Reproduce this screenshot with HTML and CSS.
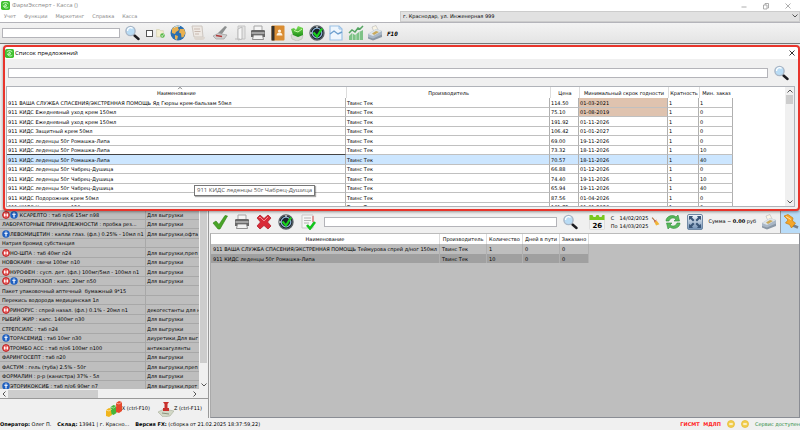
FILE: index.html
```html
<!DOCTYPE html>
<html lang="ru">
<head>
<meta charset="utf-8">
<title>ФармЭксперт - Касса</title>
<link rel="stylesheet" href="styles.css">
</head>
<body>
<svg class="defs" aria-hidden="true">
  <linearGradient id="gSteel" x1="0" y1="0" x2="0" y2="1"><stop offset="0" stop-color="#f4f8fc"/><stop offset="1" stop-color="#6f8fb4"/></linearGradient>
  <linearGradient id="gGreen" x1="0" y1="0" x2="0" y2="1"><stop offset="0" stop-color="#7fe05a"/><stop offset="1" stop-color="#178a12"/></linearGradient>
  <symbol id="logo" viewBox="0 0 16 16"><rect width="16" height="16" rx="3" fill="#3fbf2f"/><path d="M3 5c3-3 7-3 10 0M4 8c0 4 6 6 9 3M8 5l2 4-4 1z" fill="none" stroke="#d8ffd0" stroke-width="1.6"/></symbol>
  <symbol id="search" viewBox="0 0 16 16"><path d="M10.500 10.500L14.500 14" stroke="#1d1d22" stroke-width="2.400" stroke-linecap="round"/><circle cx="6.500" cy="6" r="4.600" fill="#b9dcf5" stroke="#a9b6c6" stroke-width="1.400"/><path d="M3.500 6a3 3 0 0 1 5-2.500" stroke="#fff" stroke-width="1.300" fill="none"/></symbol>
  <symbol id="docok" viewBox="0 0 16 16"><path d="M1 4V1h5l2 2h5v11H1z" fill="#f3efd2" stroke="#cfc8a4"/><circle cx="11.500" cy="11.500" r="4" fill="#57b847"/><path d="M9.500 11.500l1.500 2 2.500-4" stroke="#fff" stroke-width="1.300" fill="none"/></symbol>
  <symbol id="globe" viewBox="0 0 16 16"><circle cx="8" cy="8" r="7.500" fill="#2b6fb0"/><path d="M2 4c2-3 5-3.500 7-3L8 3l1 2-3 2-1 2-3-1zM10 4l4 0 1.500 4-2 4-2 .5-.5-4-2-1zM5 10l3 1-1 4-2-1z" fill="#e8b050"/><path d="M4 2.500c2-1.500 5-1.500 6-1" stroke="#bfe0f5" fill="none"/></symbol>
  <symbol id="scroll" viewBox="0 0 16 16"><path d="M2 1h10l1 11H4z" fill="#eee9e4" stroke="#cdc6c0"/><path d="M4 12h11c0 3-3 3-3 3H6c-2 0-2-3-2-3z" fill="#ddd6cf"/><path d="M4 4h6M4.500 6.500h6M5 9h4" stroke="#c9b9b0"/></symbol>
  <symbol id="scanner" viewBox="0 0 16 16"><path d="M1 11l5-2.500 9 1.500-3 4H4z" fill="#cfcfcf" stroke="#9d9d9d" stroke-width=".7"/><path d="M6 8l7-7 2 1-5 7z" fill="#8d9090"/><path d="M4 10.500l6 1" stroke="#b03838" stroke-width="1.300"/></symbol>
  <symbol id="folder" viewBox="0 0 16 16"><path d="M6 1h7v13H6z" fill="#e4e4e4" stroke="#c4c4c4"/><path d="M6 4L10 2v12l-4 1z" fill="#f6f6f6" stroke="#b0b0b0" stroke-width=".8"/><path d="M3 14h5" stroke="#bbb"/></symbol>
  <symbol id="printer" viewBox="0 0 16 16"><path d="M4 6V1h8v5" fill="#f5f5f5" stroke="#a5a5a5"/><path d="M1 6q0-1 1.500-1h11Q15 5 15 6v6H1z" fill="#676767"/><path d="M1.500 8h13" stroke="#bababa" stroke-width="1.500"/><path d="M3.500 10h9l1 4.500h-11z" fill="#f2f2f2" stroke="#777" stroke-width=".8"/></symbol>
  <symbol id="book" viewBox="0 0 16 16"><rect x="1.500" y=".5" width="13" height="15" rx="1" fill="#da8d33"/><path d="M1.500 1h3v14.500h-3z" fill="#33302c"/><circle cx="9.500" cy="6" r="1.600" fill="#fff3df"/><path d="M6.500 10.500c0-4 6-4 6 0z" fill="#fff3df"/></symbol>
  <symbol id="box" viewBox="0 0 16 16"><path d="M2 10l6-2 6 2-1 4-5 2-5-2z" fill="#d9dcd6" stroke="#b2b8ae" stroke-width=".6"/><path d="M2 4l3-1 2 2 2-4 5 2v7l-5 2-5-2z" fill="url(#gGreen)"/><path d="M5 5.500l4 1.500 4-3" stroke="#c8ffa8" fill="none"/></symbol>
  <symbol id="gauge" viewBox="0 0 16 16"><circle cx="8" cy="8" r="7" fill="#18222a" stroke="#5a6268" stroke-width="1.400"/><circle cx="8" cy="8" r="4.800" fill="none" stroke="#8fb7d8" stroke-width="1.200"/><path d="M4.500 7.500l3.500 4 5-8" stroke="#19d21e" stroke-width="2.200" fill="none"/><path d="M8 1v2M1 8h2" stroke="#fff"/></symbol>
  <symbol id="docwave" viewBox="0 0 16 16"><path d="M2 1h9l3 3v11H2z" fill="#eef6fd" stroke="#9cc2e6" stroke-width="1.200"/><path d="M11 1v3h3" fill="none" stroke="#9cc2e6"/><path d="M2 9l4-3 4 3 4-2" fill="none" stroke="#6d9fce" stroke-width="1.400"/></symbol>
  <symbol id="chart" viewBox="0 0 16 16"><path d="M1 15V11l3-3 3 2 4-3 4-2v10z" fill="#7ec287"/><path d="M1 8l3-3 3 2 3-4 2 1 3-3" fill="none" stroke="#55a562" stroke-width="1.500"/><path d="M4.500 8v7M8 9v6M11.500 7v8" stroke="#dff2e1" stroke-width=".6"/></symbol>
  <symbol id="register" viewBox="0 0 16 16"><path d="M5 2l4-1.500L11 5 7 7z" fill="#faf5e6" stroke="#aaa" stroke-width=".5"/><path d="M1 9l8-5 6 2v5l-9 4-5-2z" fill="#a9b7c6"/><path d="M1 9l8-5 6 2-9 5z" fill="#dce3e8"/><path d="M5 8.500l4-2.500 3 1-5 3z" fill="#c9a95b"/><path d="M1 12l5 1.500 9-4V12l-9 3.500-5-2z" fill="#8a97a5"/></symbol>
  <symbol id="check" viewBox="0 0 16 16"><path d="M1 9l3-2 3 3.500L13 1.500l2.500 .5L8 15H6z" fill="#4aa528" stroke="#2f7f16" stroke-width=".6"/></symbol>
  <symbol id="cross" viewBox="0 0 16 16"><path d="M1 4l3-3 4 3.500L12 1l3 3-3.500 4L15 12l-3 3-4-3.500L4 15l-3-3 3.500-4z" fill="#d92b38" stroke="#a81722" stroke-width=".7"/><path d="M3 4l1-1 4 4 4-4" stroke="#f48990" fill="none"/></symbol>
  <symbol id="listok" viewBox="0 0 16 16"><path d="M2 1h11v13H2z" fill="#f6f6f6" stroke="#c9c9c9"/><path d="M4 4h7M4 6.500h7M4 9h5" stroke="#999" stroke-width=".7"/><path d="M13 2v6" stroke="#d66" stroke-width="1.200"/><path d="M7 11l3 3.500L15 8" stroke="#12c41b" stroke-width="2.600" fill="none"/></symbol>
  <symbol id="calendar" viewBox="0 0 16 16"><rect x=".5" y="2" width="15" height="13.500" rx="1" fill="#f2f2f2" stroke="#ccc" stroke-width=".5"/><path d="M.5 1h3l1 2h2l1-2h2l1 2h2l1-2h2v5H.5z" fill="#78c81f"/></symbol>
  <symbol id="broom" viewBox="0 0 16 16"><path d="M2 1l6 7" stroke="#b06b3a" stroke-width="2"/><path d="M6 9l4-3 5 7-6 2z" fill="#f0b53a"/><path d="M5.500 9l4-3.500" stroke="#c63a3a" stroke-width="1.500"/></symbol>
  <symbol id="refresh" viewBox="0 0 16 16"><path d="M1 7c0-5 7-7 10-4l2-2 1.500 6H9l2-2C8 3 5 4 4 7z" fill="#58b85a" stroke="#2f8d39" stroke-width=".6"/><path d="M15 9c0 5-7 7-10 4l-2 2L1.500 9H7l-2 2c3 2 6 1 7-2z" fill="#58b85a" stroke="#2f8d39" stroke-width=".6"/></symbol>
  <symbol id="expand" viewBox="0 0 16 16"><rect x=".5" y=".5" width="15" height="15" rx="1.500" fill="url(#gSteel)" stroke="#7089a5"/><path d="M2 2h4L5 3.500 7.500 6 6 7.500 3.500 5 2 6zM14 2h-4l1 1.500L8.500 6 10 7.500 12.500 5 14 6zM2 14h4l-1-1.500L7.500 10 6 8.500 3.500 11 2 10zM14 14h-4l1-1.500L8.500 10 10 8.500l2.500 2.500 1.500-1z" fill="#3a5678"/></symbol>
  <symbol id="pin" viewBox="0 0 16 16"><path d="M9 11l6 2.500" stroke="#75808c" stroke-width="2.600"/><path d="M1 2l4-1.500 5 3.500-.5 3 3 2-4 5-2-3.500L2.500 9 5 6z" fill="#f4a62a" stroke="#c97c10" stroke-width=".7"/><path d="M3 2.500l5 3" stroke="#ffe0a0"/></symbol>
  <symbol id="stop" viewBox="0 0 16 16"><circle cx="8" cy="8" r="6.800" fill="#e66" stroke="#b92222" stroke-width="2"/><path d="M4 8h8M5 5v6M11 5v6" stroke="#fff" stroke-width="1.800"/></symbol>
  <symbol id="info" viewBox="0 0 16 16"><circle cx="8" cy="8" r="7.500" fill="#1e5fc0"/><path d="M4.500 6.500h7M8 7v6M8 3v2" stroke="#fff" stroke-width="2.400" fill="none"/></symbol>
  <symbol id="bars" viewBox="0 0 16 16"><path d="M0 9l3-2 3 1v6l-3 2-3-1z" fill="#f1b51c"/><path d="M4.500 6l3-2 3 1v7l-3 2-2-1z" fill="#47b53a"/><path d="M10 2l3-2 3 1v9l-3 2-3-1z" fill="#e5492c"/><path d="M0 9l3 1 3-2M4.500 6l3 1 3-2M10 2l3 1 3-2" stroke="#fff" stroke-width=".7" fill="none" opacity=".7"/></symbol>
  <symbol id="stamp" viewBox="0 0 16 16"><path d="M0 11l6-3 10 2-4 5-7 1z" fill="#d3d8c6" stroke="#a8af9a" stroke-width=".6"/><path d="M5 1h6l-1.500 2v4h1.500v3H5V7h1.500V3z" fill="#c9302c"/><path d="M4 12l7 1" stroke="#8a937c"/></symbol>
  <symbol id="minus" viewBox="0 0 16 16"><circle cx="8" cy="8" r="7" fill="#f2cf52" stroke="#e6b932" stroke-width="1.500"/><path d="M4.500 8h7" stroke="#fff" stroke-width="2.600"/></symbol>
  <symbol id="up" viewBox="0 0 8 8"><path d="M1.500 5.500L4 3l2.500 2.500" fill="none" stroke="#555"/></symbol>
  <symbol id="down" viewBox="0 0 8 8"><path d="M1.500 2.500L4 5l2.500-2.500" fill="none" stroke="#555"/></symbol>
  <symbol id="left" viewBox="0 0 8 8"><path d="M5.500 1.500L3 4l2.500 2.500" fill="none" stroke="#555"/></symbol>
  <symbol id="right" viewBox="0 0 8 8"><path d="M2.500 1.500L5 4 2.500 6.500" fill="none" stroke="#555"/></symbol>
  <symbol id="wmin" viewBox="0 0 8 8"><path d="M1.500 5h5" stroke="#999" stroke-width=".8"/></symbol>
  <symbol id="wmax" viewBox="0 0 8 8"><path d="M3 3V1.500h3.500v4.500H5.500M1.500 3h3.500v4H1.500z" fill="none" stroke="#999" stroke-width=".8"/></symbol>
  <symbol id="wclose" viewBox="0 0 8 8"><path d="M1.500 1.500l5 5M6.500 1.500l-5 5" stroke="currentColor" stroke-width=".8"/></symbol>
</svg>

<div class="app">
  <header class="titlebar">
    <svg class="ic-s"><use href="#logo"/></svg>
    <span class="app-name">ФармЭксперт - Касса ()</span>
    <div class="win-buttons">
      <button aria-label="Свернуть"><svg class="ic-xs"><use href="#wmin"/></svg></button>
      <button aria-label="Развернуть"><svg class="ic-xs"><use href="#wmax"/></svg></button>
      <button aria-label="Закрыть"><svg class="ic-xs"><use href="#wclose"/></svg></button>
    </div>
  </header>
  <div class="menubar">
    <nav class="menu"><button>Учет</button><button>Функции</button><button>Маркетинг</button><button>Справка</button><button>Касса</button></nav>
    <div class="address">
      <select aria-label="Адрес"><option>г. Краснодар, ул. Инженерная 999</option></select>
      <svg class="ic-xs chev"><use href="#down"/></svg>
    </div>
  </div>
  <div class="toolbar">
    <input class="field main-search" type="text" aria-label="Поиск">
    <button class="find" aria-label="Найти"><svg class="ic"><use href="#search"/></svg></button>
    <label class="tick"><input type="checkbox" aria-label="Только проверенные"><svg class="ic-s"><use href="#docok"/></svg></label>
    <div class="tools">
      <button aria-label="Интернет"><svg class="ic"><use href="#globe"/></svg></button>
      <button aria-label="Рецепты"><svg class="ic"><use href="#scroll"/></svg></button>
      <button class="gap" aria-label="Сканер"><svg class="ic"><use href="#scanner"/></svg></button>
      <button aria-label="Папка"><svg class="ic"><use href="#folder"/></svg></button>
    </div>
    <div class="tools main-tools">
      <button aria-label="Печать"><svg class="ic"><use href="#printer"/></svg></button>
      <button aria-label="Справочник"><svg class="ic"><use href="#book"/></svg></button>
      <button aria-label="Товар"><svg class="ic"><use href="#box"/></svg></button>
      <button aria-label="Контроль"><svg class="ic"><use href="#gauge"/></svg></button>
      <button aria-label="Отчет"><svg class="ic"><use href="#docwave"/></svg></button>
      <button aria-label="График"><svg class="ic"><use href="#chart"/></svg></button>
      <button aria-label="Касса"><svg class="ic"><use href="#register"/></svg></button>
      <span class="hotkey">F10</span>
    </div>
  </div>

  <main class="workspace">
    <section class="stock">
      <div class="stock-view">
        <div class="stock-clip">
        <table class="stock-table">
          <colgroup><col><col class="c-group"></colgroup>
          <tbody>
            <tr><td><svg class="ic-s"><use href="#stop"/></svg><svg class="ic-s"><use href="#info"/></svg> КСАРЕЛТО : таб п/о6 15мг n98</td><td>Для выгрузки</td></tr>
            <tr><td>ЛАБОРАТОРНЫЕ ПРИНАДЛЕЖНОСТИ : пробка рез...</td><td>Для выгрузки</td></tr>
            <tr><td><svg class="ic-s"><use href="#info"/></svg>ЛЕВОМИЦЕТИН : капли глаз. (фл.) 0.25% - 10мл n1</td><td>Для выгрузки,офта</td></tr>
            <tr><td>Натрия бромид субстанция</td><td></td></tr>
            <tr><td><svg class="ic-s"><use href="#stop"/></svg>НО-ШПА : таб 40мг n24</td><td>Для выгрузки,преп</td></tr>
            <tr><td>НОВОКАИН : свечи 100мг n10</td><td>Для выгрузки</td></tr>
            <tr><td><svg class="ic-s"><use href="#stop"/></svg>НУРОФЕН : сусп. дет. (фл.) 100мг/5мл - 100мл n1</td><td>Для выгрузки</td></tr>
            <tr><td><svg class="ic-s"><use href="#stop"/></svg><svg class="ic-s"><use href="#info"/></svg> ОМЕПРАЗОЛ : капс. 20мг n50</td><td>Для выгрузки</td></tr>
            <tr><td>Пакет упаковочный аптечный&nbsp; бумажный 9*15</td><td></td></tr>
            <tr><td>Перекись водорода медицинская 1л</td><td></td></tr>
            <tr><td><svg class="ic-s"><use href="#stop"/></svg>РИНОРУС : спрей назал. (фл.) 0.1% - 20мл n1</td><td>декогестанты для н</td></tr>
            <tr><td>РЫБИЙ ЖИР : капс. 1400мг n30</td><td>Для выгрузки</td></tr>
            <tr><td>СТРЕПСИЛС : таб n24</td><td>Для выгрузки</td></tr>
            <tr><td><svg class="ic-s"><use href="#info"/></svg>ТОРАСЕМИД : таб 10мг n30</td><td>диуретики,Для выг</td></tr>
            <tr><td><svg class="ic-s"><use href="#stop"/></svg>ТРОМБО АСС : таб п/о6 100мг n100</td><td>антикоагулянты</td></tr>
            <tr><td>ФАРИНГОСЕПТ : таб n20</td><td>Для выгрузки</td></tr>
            <tr><td>ФАСТУМ : гель (туба) 2.5% - 50г</td><td>Для выгрузки,преп</td></tr>
            <tr><td>ФОРМАЛИН : р-р (канистра) 37% - 5л</td><td>Для выгрузки</td></tr>
            <tr><td><svg class="ic-s"><use href="#info"/></svg>ЭТОРИКОКСИБ : таб п/о6 90мг n7</td><td>Для выгрузки,прот</td></tr>
          </tbody>
        </table>
        </div>
        <div class="vbar stock-vbar"><span class="thumb"></span><svg class="ic-xs"><use href="#down"/></svg></div>
        <div class="hbar"><svg class="ic-xs"><use href="#left"/></svg><span class="hthumb"></span><svg class="ic-xs"><use href="#right"/></svg></div>
      </div>
      <div class="reports">
        <button><svg class="ic"><use href="#bars"/></svg>X (ctrl-F10)</button>
        <button><svg class="ic"><use href="#stamp"/></svg>Z (ctrl-F11)</button>
      </div>
    </section>

    <section class="order">
      <div class="order-tools">
        <button aria-label="Принять"><svg class="ic"><use href="#check"/></svg></button>
        <button aria-label="Печать"><svg class="ic"><use href="#printer"/></svg></button>
        <button aria-label="Удалить"><svg class="ic"><use href="#cross"/></svg></button>
        <button aria-label="Контроль"><svg class="ic"><use href="#gauge"/></svg></button>
        <button aria-label="Список"><svg class="ic"><use href="#listok"/></svg></button>
        <input class="field grow" type="text" aria-label="Поиск по заказу">
        <button class="wide" aria-label="Найти"><svg class="ic"><use href="#search"/></svg></button>
        <button class="wide cal" aria-label="Период"><svg class="ic"><use href="#calendar"/></svg><span class="day">26</span></button>
        <div class="period"><span>С</span><span>14/02/2025</span><span>По</span><span>14/03/2025</span></div>
        <button class="slim" aria-label="Очистить"><svg class="ic-s"><use href="#broom"/></svg></button>
        <button aria-label="Обновить"><svg class="ic"><use href="#refresh"/></svg></button>
        <button aria-label="Развернуть"><svg class="ic"><use href="#expand"/></svg></button>
        <span class="sum">Сумма ~ <b>0.00</b> руб</span>
        <button aria-label="Касса"><svg class="ic"><use href="#register"/></svg></button>
        <button class="pinned" aria-label="Закрепить"><svg class="ic"><use href="#pin"/></svg></button>
      </div>
      <div class="order-view">
        <table class="order-table">
          <colgroup><col class="o-name"><col class="o-maker"><col class="o-qty"><col class="o-days"><col class="o-done"><col></colgroup>
          <thead><tr><th>Наименование</th><th>Производитель</th><th>Количество</th><th>Дней в пути</th><th>Заказано</th><th></th></tr></thead>
          <tbody>
            <tr><td>911 ВАША СЛУЖБА СПАСЕНИЯ/ЭКСТРЕННАЯ ПОМОЩЬ Теймурова спрей д/ног 150мл</td><td>Твинс Тек</td><td>1</td><td>0</td><td>0</td><td></td></tr>
            <tr class="current"><td>911 КИДС леденцы 50г Ромашка-Липа</td><td>Твинс Тек</td><td>10</td><td>0</td><td>0</td><td></td></tr>
          </tbody>
        </table>
      </div>
    </section>

    <section class="dialog" role="dialog" aria-labelledby="dlg-title">
      <header class="dialog-title">
        <svg class="ic-s"><use href="#logo"/></svg>
        <h1 id="dlg-title">Список предложений</h1>
        <button aria-label="Закрыть окно"><svg class="ic-xs"><use href="#wclose"/></svg></button>
      </header>
      <div class="dialog-search">
        <input class="field grow" type="text" aria-label="Поиск предложений">
        <button aria-label="Найти"><svg class="ic"><use href="#search"/></svg></button>
      </div>
      <div class="offers">
        <div class="offers-clip">
        <table class="offers-table">
          <colgroup><col><col class="f-maker"><col class="f-price"><col class="f-date"><col class="f-mult"><col class="f-min"></colgroup>
          <thead><tr><th class="sorted">Наименование<svg class="ic-xs sort"><use href="#up"/></svg></th><th>Производитель</th><th>Цена</th><th>Минимальный скрок годности</th><th>Кратность</th><th>Мин. заказ</th></tr></thead>
          <tbody>
            <tr><td>911 ВАША СЛУЖБА СПАСЕНИЯ/ЭКСТРЕННАЯ ПОМОЩЬ Яд Гюрзы крем-бальзам 50мл</td><td>Твинс Тек</td><td>114.50</td><td class="expired">01-03-2021</td><td>1</td><td>1</td></tr>
            <tr><td>911 КИДС Ежедневный уход крем 150мл</td><td>Твинс Тек</td><td>75.10</td><td class="expired">01-08-2019</td><td>1</td><td>0</td></tr>
            <tr><td>911 КИДС Ежедневный уход крем 150мл</td><td>Твинс Тек</td><td>191.92</td><td>01-11-2026</td><td>1</td><td>0</td></tr>
            <tr><td>911 КИДС Защитный крем 50мл</td><td>Твинс Тек</td><td>106.42</td><td>01-01-2027</td><td>1</td><td>0</td></tr>
            <tr><td>911 КИДС леденцы 50г Ромашка-Липа</td><td>Твинс Тек</td><td>69.00</td><td>19-11-2026</td><td>1</td><td>0</td></tr>
            <tr class="above"><td>911 КИДС леденцы 50г Ромашка-Липа</td><td>Твинс Тек</td><td>73.32</td><td>18-11-2026</td><td>1</td><td>10</td></tr>
            <tr class="selected"><td>911 КИДС леденцы 50г Ромашка-Липа</td><td>Твинс Тек</td><td>70.57</td><td>18-11-2026</td><td>1</td><td>40</td></tr>
            <tr><td>911 КИДС леденцы 50г Чабрец-Душица</td><td>Твинс Тек</td><td>66.88</td><td>01-12-2026</td><td>1</td><td>0</td></tr>
            <tr><td>911 КИДС леденцы 50г Чабрец-Душица</td><td>Твинс Тек</td><td>74.40</td><td>19-11-2026</td><td>1</td><td>10</td></tr>
            <tr><td>911 КИДС леденцы 50г Чабрец-Душица</td><td>Твинс Тек</td><td>65.94</td><td>19-11-2026</td><td>1</td><td>40</td></tr>
            <tr><td>911 КИДС Подорожник крем 50мл</td><td>Твинс Тек</td><td>87.56</td><td>01-04-2026</td><td>1</td><td>0</td></tr>
            <tr><td>911 КИДС Череда крем 150мл</td><td>Твинс Тек</td><td>161.75</td><td>01-01-2026</td><td>1</td><td>0</td></tr>
          </tbody>
        </table>
        </div>
        <div class="vbar"><svg class="ic-xs"><use href="#up"/></svg><span class="thumb"></span><svg class="ic-xs"><use href="#down"/></svg></div>
      </div>
      <div class="tip" role="tooltip">911 КИДС леденцы 50г Чабрец-Душица</div>
    </section>
  </main>

  <footer class="status">
    <span><b>Оператор:</b> Олег П.</span>
    <span><b>Склад:</b> 13941 | г. Красно...</span>
    <span><b>Версия FX:</b> (сборка от 21.02.2025 18:37:59,22)</span>
    <span class="alert">ГИСМТ&nbsp; МДЛП</span>
    <svg class="ic-xs"><use href="#minus"/></svg>
    <svg class="ic-xs"><use href="#minus"/></svg>
    <span class="ok">Сервис доступен</span>
  </footer>
</div>
</body>
</html>
```

FILE: styles.css
```css
* { box-sizing: border-box; }
html, body { height: 100%; margin: 0; }
body {
  font: 5px/9px "DejaVu Sans", sans-serif;
  color: #000;
  background: #f0f0f0;
  overflow: hidden;
}
button, input, select { font: inherit; color: inherit; margin: 0; }
button {
  display: flex;
  align-items: center;
  justify-content: center;
  border: 0;
  padding: 0;
  background: none;
}
svg { display: block; flex: none; }
.defs { position: absolute; width: 0; height: 0; }
.ic { width: 16px; height: 16px; }
.ic-s { width: 9px; height: 9px; }
.ic-xs { width: 8px; height: 8px; }
.field { border: 1px solid #b4b4b9; background: #fff; height: 10px; padding: 0 2px; min-width: 0; }
.grow { flex: 1; }

.app { display: flex; flex-direction: column; height: 100%; }

.titlebar { display: flex; align-items: center; gap: 2px; height: 11px; padding-left: 1px; background: #fff; color: #888; }
.app-name { font: 6px/9px "Open Sans", sans-serif; }
.win-buttons { display: flex; gap: 14px; margin-left: auto; padding-right: 8px; color: #999; }

.menubar { display: flex; justify-content: space-between; height: 11px; background: #fff; color: #888; }
.menu { display: flex; gap: 8px; padding-left: 4px; }
.address { position: relative; width: 50%; }
.address select {
  display: block;
  width: 100%;
  height: 11px;
  appearance: none;
  border: 1px solid #ccc;
  background: #e1e1e1;
  color: #000;
  padding: 0 2px;
}
.chev { position: absolute; right: 1px; top: 1px; }

.toolbar {
  display: flex;
  align-items: center;
  height: 22px;
  padding: 0 2px;
  border-top: 1px solid #b4b4ba;
  border-bottom: 1px solid #777;
  background: linear-gradient(#f3f3f3, #e4e4e4);
}
.main-search { width: 118px; }
.find { margin-left: 4px; }
.tick { display: flex; align-items: center; gap: 3px; margin-left: 6px; }
.tick input { appearance: none; width: 7px; height: 7px; border: 1px solid #555; background: #fff; }
.tools { display: flex; align-items: center; margin-left: 3px; }
.tools button { width: 20px; }
.tools .gap { margin-left: 2px; }
.main-tools { margin-left: -2px; }
.main-tools button { width: 20px; }
.main-tools button:nth-child(even) { width: 19px; }
.hotkey { margin-left: 2px; font: italic bold 6px/9px "DejaVu Sans Mono", monospace; }

.workspace { position: relative; flex: 1; display: flex; min-height: 0; padding-top: 166px; }

.stock { display: flex; flex-direction: column; width: 208px; }
.stock-view {
  flex: 1;
  min-height: 0;
  display: grid;
  grid-template: minmax(0, 1fr) 9px / minmax(0, 1fr) 9px;
  border-bottom: 1px solid #999;
}
.stock-clip { overflow: hidden; background: #bebebe; }
table { border-collapse: separate; border-spacing: 0; table-layout: fixed; width: 100%; }
th, td { padding: 0; overflow: hidden; white-space: nowrap; text-align: left; }
tbody tr:nth-child(odd) td { height: 10px; }
tbody tr:nth-child(even) td { height: 9px; }
tbody td { line-height: 8px; }
.c-group { width: 54px; }
.stock-table td { border-bottom: 1px solid #a8a8a8; padding-left: 2px; }
.stock-table td + td { border-left: 1px solid #a8a8a8; padding-left: 1px; }
.stock-table svg { display: inline-block; width: 8px; height: 8px; vertical-align: top; }
.vbar { display: flex; flex-direction: column; align-items: center; width: 9px; background: #f0f0f0; }
.vbar .thumb { width: 7px; height: 9px; background: #cdcdcd; }
.stock-vbar .thumb { height: 153px; }
.vbar svg:last-child { margin-top: auto; }
.hbar { display: flex; align-items: center; background: #f0f0f0; }
.hthumb { width: 90px; height: 8px; margin-right: auto; background: #cdcdcd; }
.reports { display: flex; justify-content: flex-end; gap: 8px; height: 19px; padding-right: 6px; }

.order { flex: 1; display: flex; flex-direction: column; min-width: 0; border-left: 1px solid #999; }
.order-tools { display: flex; align-items: center; height: 23px; }
.order-tools button { flex: none; width: 22px; height: 22px; }
.order-tools .wide { width: 27px; }
.order-tools .field { margin-left: 5px; }
.order-tools .slim { width: 14px; }
.order-tools .pinned { width: 20px; border-left: 1px solid #999; background: #b9dcf8; }
.cal { position: relative; }
.day { position: absolute; left: 0; right: 0; bottom: 2px; text-align: center; font-size: 7px; font-weight: 700; }
.period { display: grid; grid-template-columns: auto auto; column-gap: 2px; line-height: 8px; }
.sum { padding: 0 2px; white-space: nowrap; }
.order-view { flex: 1; margin-left: 1px; background: #bebebe; border: 1px solid #8a8d94; border-top-color: #bbb; border-left-color: #aaa; }
.order-table th { height: 10px; background: #fff; text-align: center; font-weight: 400; border-right: 1px solid #ddd; }
.order-table th:last-child { border: 0; }
.order-table tbody td { padding-left: 2px; border-right: 1px solid #b0b0b0; }
.order-table tbody td:last-child { border: 0; }
.order-table .current td:not(:last-child) { background: #a0a0a0; }
.o-name { width: 229px; }
.o-maker { width: 47px; }
.o-qty { width: 36px; }
.o-days { width: 37px; }
.o-done { width: 29px; }

.dialog {
  position: absolute;
  top: 1px;
  left: 3px;
  right: 0;
  border: 2px solid #e8352c;
  border-radius: 4px;
  background: #f0f0f0;
  box-shadow: 0 1px 3px #0006;
}
.dialog-title { display: flex; align-items: center; gap: 1px; height: 12px; padding: 0 2px 0 0; background: #fff; border-radius: 3px 3px 0 0; }
.dialog-title h1 { margin: 0 auto 0 0; font: 6px/9px "Open Sans", sans-serif; }
.dialog-search { display: flex; align-items: center; gap: 5px; padding: 6px 9px 5px 3px; }
.offers { display: flex; height: 121px; margin: 0 3px 2px 1px; border: 1px solid #b0b3b9; background: #fff; }
.offers-clip { flex: 1; min-width: 0; overflow: hidden; }
.offers-table { width: calc(100% - 52px); }
.offers-table th { height: 11px; font-weight: 400; text-align: center; vertical-align: bottom; line-height: 9px; }
.offers-table th + th { border-left: 1px solid #ddd; }
.sorted { position: relative; }
.sort { position: absolute; top: -3px; left: 50%; width: 6px; }
.offers-table td { padding-left: 1px; border-right: 1px solid #b0b0b0; border-bottom: 1px solid #c0c0c0; }
.f-maker { width: 204px; }
.f-price { width: 29px; }
.f-date { width: 89px; }
.f-mult { width: 31px; }
.f-min { width: 34px; }
.expired { background: #dfc3af; }
.selected td { background: #cce6ff; }
.above td:first-child { border-bottom-color: #444; }
.tip {
  position: absolute;
  left: 189px;
  top: 138px;
  padding: 0 2px;
  border: 1px solid #777;
  background: #fff;
  box-shadow: 1px 1px 1px #0005;
  color: #555;
  font: 6px/9px "Open Sans", sans-serif;
}

.status { display: flex; align-items: center; gap: 6px; height: 12px; background: #f0f0f0; white-space: nowrap; }
.alert { margin-left: auto; color: #f22; font-weight: 700; }
.ok { color: #2a8a3a; }
```
